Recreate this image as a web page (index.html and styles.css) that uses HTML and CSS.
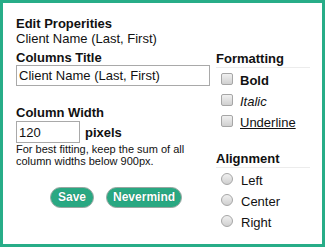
FILE: index.html
```html
<!DOCTYPE html>
<html>
<head>
<meta charset="utf-8">
<link rel="stylesheet" href="styles.css">
</head>
<body>
<div class="panel">
  <div class="title">Edit Properities</div>
  <div class="subtitle">Client Name (Last, First)</div>
  <div class="cols">
    <div class="left">
      <div class="label">Columns Title</div>
      <input class="text-input" type="text" value="Client Name (Last, First)">
      <div class="label label-width">Column Width</div>
      <div class="width-row">
        <input class="num-input" type="text" value="120">
        <span class="unit">pixels</span>
      </div>
      <div class="help">For best fitting, keep the sum of all column widths below 900px.</div>
      <div class="buttons">
        <button class="btn">Save</button>
        <button class="btn">Nevermind</button>
      </div>
    </div>
    <div class="right">
      <div class="heading">Formatting</div>
      <div class="options">
        <label class="opt"><span class="box"></span><span class="bold">Bold</span></label>
        <label class="opt"><span class="box"></span><span class="italic">Italic</span></label>
        <label class="opt"><span class="box"></span><span class="under">Underline</span></label>
      </div>
      <div class="heading heading-align">Alignment</div>
      <div class="options">
        <label class="opt"><span class="radio"></span><span>Left</span></label>
        <label class="opt"><span class="radio"></span><span>Center</span></label>
        <label class="opt"><span class="radio"></span><span>Right</span></label>
      </div>
    </div>
  </div>
</div>
</body>
</html>
```

FILE: styles.css
```css
html, body {
  margin: 0;
  padding: 0;
  background: #fff;
}
body {
  font-family: "Liberation Sans", Arial, sans-serif;
  font-size: 13px;
  line-height: 15px;
  color: #111;
}
.panel {
  box-sizing: border-box;
  width: 325px;
  height: 247px;
  border: 3px solid #27ad88;
  padding: 13px 0 0 13px;
}
.title {
  font-weight: bold;
}
.cols {
  display: flex;
  margin-top: 4px;
}
.left {
  width: 194px;
}
.right {
  width: 94px;
  margin-left: 6px;
  margin-top: 1px;
}
.label {
  font-weight: bold;
}
.label-width {
  margin-top: 19px;
}
.text-input, .num-input {
  box-sizing: border-box;
  display: block;
  margin: 0;
  border: 1px solid #a9a9a9;
  padding: 0 2px;
  font-family: "Liberation Sans", Arial, sans-serif;
  font-size: 13px;
  color: #111;
  outline: none;
}
.text-input {
  width: 194px;
  height: 21px;
}
.width-row {
  display: flex;
  align-items: baseline;
  margin-top: 1px;
}
.num-input {
  width: 64px;
  height: 22px;
}
.unit {
  font-weight: bold;
  margin-left: 5px;
}
.help {
  font-size: 11px;
  line-height: 12px;
}
.buttons {
  display: flex;
  gap: 12px;
  margin-top: 20px;
  padding-left: 34px;
}
.btn {
  box-sizing: border-box;
  height: 21px;
  margin: 0;
  padding: 0 6px;
  border: 1px solid #9aa6a1;
  border-radius: 11px;
  background: #29a882;
  color: #fff;
  font-family: "Liberation Sans", Arial, sans-serif;
  font-size: 12px;
  font-weight: bold;
  line-height: 19px;
  text-shadow: 0 0 1px rgba(0, 60, 40, 0.5);
}
.btn:first-child {
  padding: 0 7px;
}
.heading {
  font-weight: bold;
  border-bottom: 1px solid #ececec;
  padding-bottom: 1px;
}
.heading-align {
  margin-top: 18px;
}
.options {
  padding-top: 2px;
}
.opt {
  display: flex;
  align-items: center;
  height: 21px;
}
.box, .radio {
  box-sizing: border-box;
  width: 12px;
  height: 12px;
  margin: -3px 7px 0 5px;
  border: 1px solid #a6a6a6;
  background: linear-gradient(#f0f0f0, #d0d0d0);
  flex: none;
}
.box {
  border-radius: 2px;
}
.radio {
  border-radius: 50%;
  margin-left: 5px;
  margin-right: 8px;
}
.bold {
  font-weight: bold;
}
.italic {
  font-style: italic;
}
.under {
  text-decoration: underline;
}
```
